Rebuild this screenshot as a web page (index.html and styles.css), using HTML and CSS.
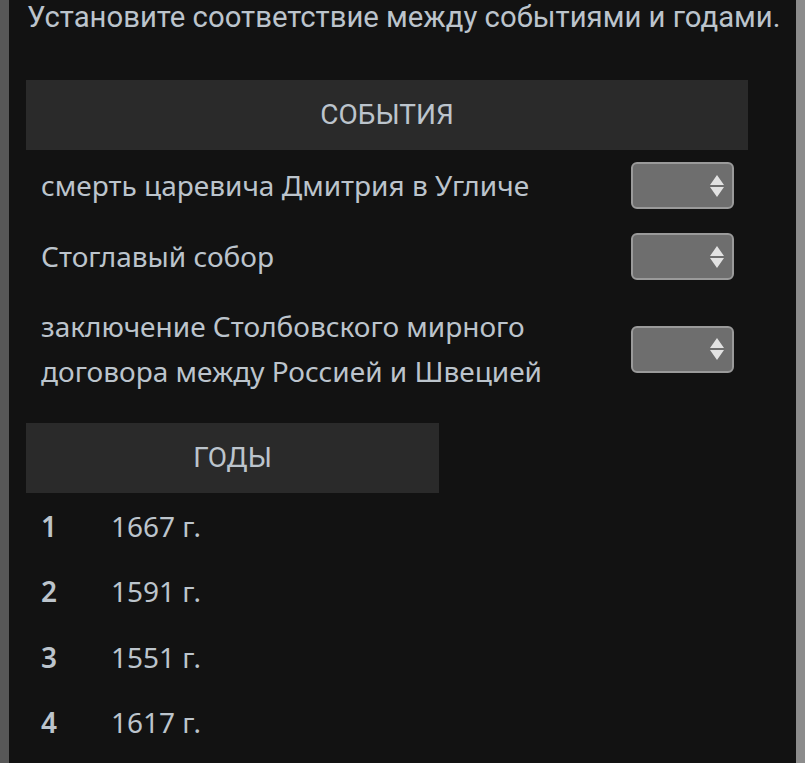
FILE: index.html
```html
<!DOCTYPE html>
<html lang="ru">
<head>
    <meta charset="UTF-8">
    <meta name="viewport" content="width=device-width, initial-scale=1.0">
    <title>Соответствие</title>
    <link rel="stylesheet" href="styles.css">
</head>
<body>
    <div class="frame">
        <p class="task">Установите соответствие между событиями и годами.</p>

        <div class="events">
            <div class="head">СОБЫТИЯ</div>
            <div class="row">
                <span class="event">смерть царевича Дмитрия в Угличе</span>
                <div class="pick">
                    <svg width="14" height="22" viewBox="0 0 14 22"><path d="M7 0 L14 10 L0 10 Z M0 12 L14 12 L7 22 Z" fill="#e2e2e2"/></svg>
                </div>
            </div>
            <div class="row">
                <span class="event">Стоглавый собор</span>
                <div class="pick">
                    <svg width="14" height="22" viewBox="0 0 14 22"><path d="M7 0 L14 10 L0 10 Z M0 12 L14 12 L7 22 Z" fill="#e2e2e2"/></svg>
                </div>
            </div>
            <div class="row">
                <span class="event">заключение Столбовского мирного<br>договора между Россией и Швецией</span>
                <div class="pick">
                    <svg width="14" height="22" viewBox="0 0 14 22"><path d="M7 0 L14 10 L0 10 Z M0 12 L14 12 L7 22 Z" fill="#e2e2e2"/></svg>
                </div>
            </div>
        </div>

        <div class="years">
            <div class="head">ГОДЫ</div>
            <div class="year"><span class="num">1</span><span>1667 г.</span></div>
            <div class="year"><span class="num">2</span><span>1591 г.</span></div>
            <div class="year"><span class="num">3</span><span>1551 г.</span></div>
            <div class="year"><span class="num">4</span><span>1617 г.</span></div>
        </div>
    </div>
</body>
</html>
```

FILE: styles.css
```css
body {
    margin: 0;
    background-color: #121212;
}
.frame {
    min-height: 763px;
    box-sizing: border-box;
    border-left: 9px solid #575757;
    border-right: 9px solid #8c8c8c;
    padding-left: 17px;
    color: #bcc4cc;
    font-family: "Noto Sans", sans-serif;
}
.task {
    margin: 0 0 0 1px;
    font-family: Roboto, sans-serif;
    font-size: 29.3px;
    line-height: 34px;
}
.events {
    width: 722px;
    margin-top: 46px;
}
.head {
    background-color: #2a2a2a;
    height: 70px;
    line-height: 70px;
    text-align: center;
    font-family: Roboto, sans-serif;
    font-size: 28px;
}
.row {
    display: flex;
    align-items: center;
    justify-content: space-between;
    padding: 12px 14px 12px 15px;
    font-size: 28px;
    line-height: 45px;
}
.row:first-of-type {
    margin-top: 2px;
}
.pick {
    width: 91px;
    height: 43px;
    border: 2px solid #9a9a9a;
    border-radius: 6px;
    background-color: #6e6e6e;
    display: flex;
    align-items: center;
    justify-content: flex-end;
    padding-right: 8px;
    box-sizing: content-box;
}
.years {
    width: 413px;
    margin-top: 17px;
}
.year {
    display: flex;
    height: 65.5px;
    align-items: center;
    padding-left: 15px;
    font-size: 28px;
}
.num {
    width: 70px;
    font-weight: 600;
}
```
